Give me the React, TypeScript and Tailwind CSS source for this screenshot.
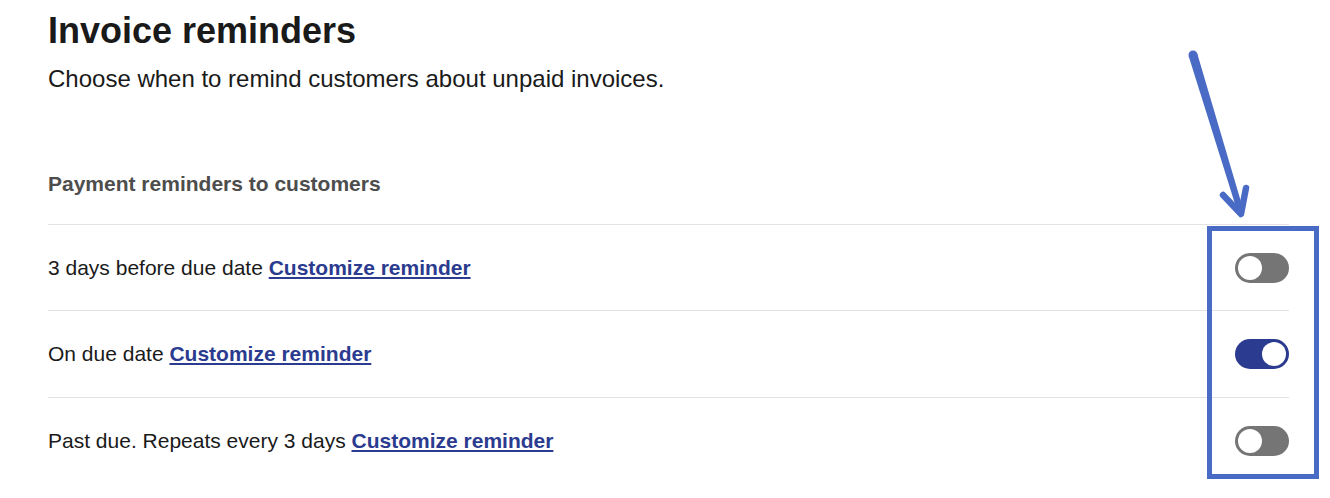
import React from "react";

function Toggle({ on }: { on: boolean }) {
  return (
    <div
      className={
        "w-[54px] h-[30px] rounded-full flex items-center px-[3px] " +
        (on ? "bg-[#2b3b8f] justify-end" : "bg-[#757575] justify-start")
      }
    >
      <div className="w-[24px] h-[24px] rounded-full bg-white" />
    </div>
  );
}

function Row({ label, on, first }: { label: string; on: boolean; first?: boolean }) {
  return (
    <div
      className={
        (first ? "h-[86px] " : "h-[87px] ") +
        "border-t border-[#e3e3e3] flex items-center justify-between"
      }
    >
      <div className="text-[21px] text-[#1a1a1a]">
        {label}{" "}
        <a className="font-bold text-[#2b3b8f] underline underline-offset-2 decoration-2" href="#">
          Customize reminder
        </a>
      </div>
      <Toggle on={on} />
    </div>
  );
}

export default function App() {
  return (
    <div
      className="relative w-[1330px] h-[498px] bg-white overflow-hidden"
      style={{ fontFamily: '"Liberation Sans", Arial, sans-serif' }}
    >
      <div className="pl-[48px] w-[1289px]">
        <h1 className="text-[36px] font-bold text-[#1a1a1a] leading-[38px] pt-[12px]">
          Invoice reminders
        </h1>
        <p className="text-[24px] text-[#1a1a1a] leading-[28px] mt-[15px]">
          Choose when to remind customers about unpaid invoices.
        </p>
        <div className="mt-[79px] pb-[28px] text-[21px] font-bold text-[#4d4d4d] leading-[24px]">
          Payment reminders to customers
        </div>
        <Row label="3 days before due date" on={false} first />
        <Row label="On due date" on={true} />
        <Row label="Past due. Repeats every 3 days" on={false} />
      </div>

      <div className="absolute left-[1207px] top-[226px] w-[112px] h-[253px] border-[5px] border-[#4a6bc5]" />
      <svg
        className="absolute left-0 top-0"
        width="1330"
        height="498"
        viewBox="0 0 1330 498"
      >
        <path
          d="M1188.7 56.3 L1197.3 53.7 L1244 212 L1238 213.5 Z"
          fill="#4a6bc5"
        />
        <circle cx="1193" cy="55" r="4.5" fill="#4a6bc5" />
        <path
          d="M1223 195 L1241 214 L1246 188"
          stroke="#4a6bc5"
          strokeWidth="6.5"
          strokeLinecap="round"
          strokeLinejoin="round"
          fill="none"
        />
      </svg>
    </div>
  );
}
